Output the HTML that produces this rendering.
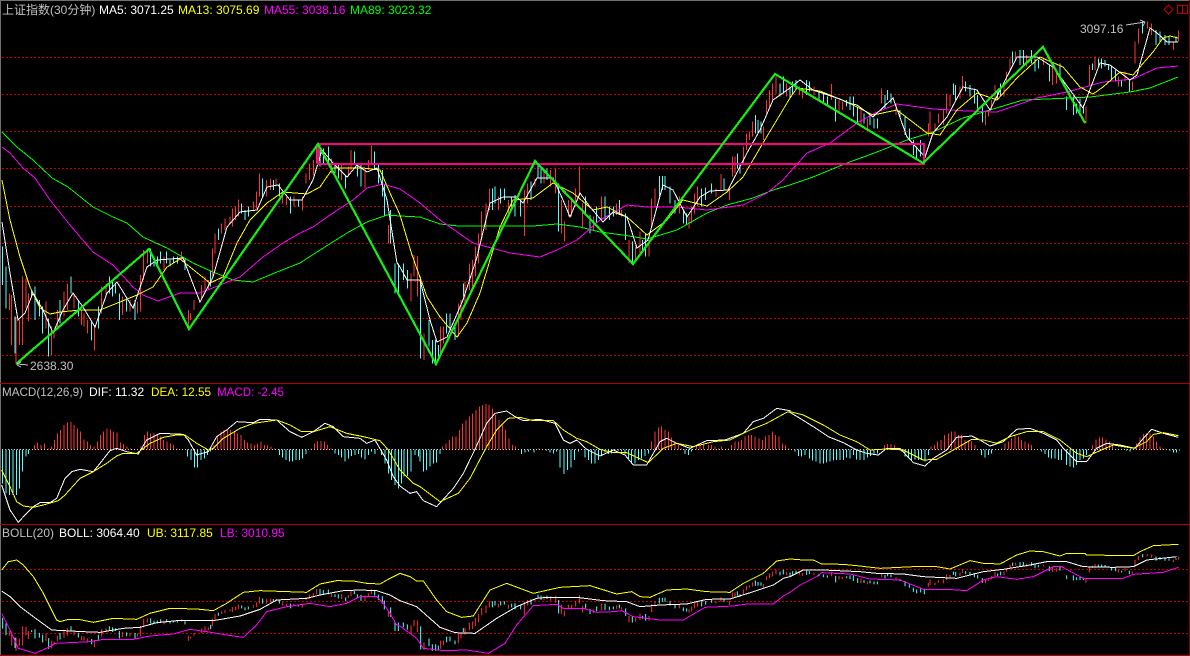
<!DOCTYPE html>
<html><head><meta charset="utf-8"><title>上证指数</title>
<style>
html,body{margin:0;padding:0;background:#000;width:1190px;height:656px;overflow:hidden}
svg{display:block}
text{font-family:"Liberation Sans","Noto Sans CJK SC",sans-serif;font-size:12px}
</style></head><body>
<svg width="1190" height="656" viewBox="0 0 1190 656" xmlns="http://www.w3.org/2000/svg" shape-rendering="crispEdges">
<rect width="1190" height="656" fill="#000"/>
<!-- borders -->
<path d="M0 .5H1190" stroke="#707070" fill="none"/>
<path d="M.5 0V656" stroke="#707070" fill="none"/>
<path d="M1189.5 0V656" stroke="#800000" fill="none"/>
<path d="M0 383.5H1190M0 524.5H1190M0 655.5H1190" stroke="#b00000" fill="none"/>
<!-- grids -->
<path d="M2 57.5H1190M2 94.5H1190M2 131.5H1190M2 168.5H1190M2 206.5H1190M2 243.5H1190M2 281.5H1190M2 318.5H1190M2 355.5H1190M2 569.5H1190M2 601.5H1190M2 633.5H1190" stroke="#c00000" stroke-dasharray="2 2" fill="none"/>

<!-- candles -->
<defs>
<g id="c" fill="none" stroke-width="3">
<g transform="scale(.33333)">
<path stroke="#ff3232" d="M28 880V930M35 885V1035M48 950V1090M58 960V1035M68 830V1035M78 835V925M85 880V965M138 905V985M155 980V1065M162 990V1015M172 930V985M192 875V950M202 850V930M222 885V925M245 930V975M252 940V980M262 960V1000M283 975V1052M305 860V940M318 850V890M367 890V945M390 900V935M412 905V940M421 825V935M431 750V840M442 745V790M492 770V810M545 755V780M565 930V985M572 940V960M582 900V930M605 855V900M615 830V880M625 840V870M637 745V830M645 700V760M665 670V700M675 655V690M690 650V670M697 625V680M707 620V660M715 598V650M760 605V635M770 575V625M778 520V590M800 540V590M812 535V570M828 535V560M848 575V610M860 590V615M882 590V620M907 590V632M918 520V550M928 490V540M940 480V525M950 435V490M995 475V520M1025 490V540M1045 500V530M1053 450V510M1095 505V565M1105 480V510M1114 437V490M1165 675V730"/>
<path stroke="#54ffff" d="M8 740V855M18 800V925M45 950V1060M95 870V890M105 860V960M118 900V950M128 920V1000M146 955V1070M180 900V970M213 830V880M235 900V950M275 965V1022M295 920V985M328 830V880M338 840V890M347 850V880M358 880V960M380 895V935M405 900V960M452 745V800M462 770V800M472 770V800M482 755V790M500 755V790M510 780V800M520 770V790M532 770V790M555 775V810M632 815V860M655 685V720M725 610V640M735 630V660M745 620V650M788 535V590M820 540V570M838 550V590M872 590V640M895 600V620M960 435V500M970 445V490M985 440V490M1005 490V520M1015 490V535M1037 525V565M1063 455V490M1072 490V530M1083 495V560M1124 455V505M1135 495V550M1147 510V590M1153 555V650M1172 630V730M1185 790V880M1195 790V880"/>
</g>
<g transform="translate(400,100) scale(.33333)">
<path stroke="#ff3232" d="M33 520V605M42 465V530M52 470V590M72 700V780M122 680V770M130 680V730M175 610V710M183 600V660M195 545V620M208 490V570M218 480V560M226 440V530M236 400V490M245 335V410M258 310V390M268 265V330M295 290V330M325 300V345M373 270V408M383 250V310M405 235V260M432 210V250M452 210V260M467 205V280M484 300V400M493 365V425M505 300V350M515 300V350M527 265V320M538 200V290M548 310V385M580 350V390M605 290V360M650 310V345M665 330V350M687 420V490M707 440V480M720 395V460M747 420V470M755 295V380M765 265V320M838 290V340M867 350V385M875 320V370M883 280V340M893 260V320M948 265V290M963 222V270M988 260V300M997 170V230M1005 170V220M1030 140V190M1040 100V150M1048 95V120M1058 65V110M1090 80V120M1100 0V40M1108 -30V20M1118 -50V0M1128 -70V-20M1160 -50V-10"/>
<path stroke="#54ffff" d="M10 490V540M22 510V565M62 530V775M87 660V740M97 720V790M107 720V790M115 735V780M140 640V700M150 640V690M165 680V720M190 550V590M277 265V330M285 260V310M302 265V310M313 265V300M335 290V330M345 285V350M362 300V350M393 245V300M414 195V235M423 205V250M441 205V240M476 250V395M557 290V340M570 345V400M590 320V370M615 290V360M628 320V360M640 320V350M658 300V340M677 340V420M697 425V490M728 420V450M737 400V470M778 228V290M787 228V270M795 228V270M810 260V310M825 300V340M850 330V370M860 340V375M905 265V320M917 262V300M935 250V280M972 235V270M1012 160V205M1020 190V220M1066 45V100M1074 60V100M1083 65V100M1140 -50V-10M1150 -70V-20M1170 -40V-5"/>
</g>
<g transform="translate(790,0) scale(.33333)">
<path stroke="#ff3232" d="M28 260V285M38 265V295M72 260V285M125 252V300M147 295V335M157 305V330M213 325V375M232 355V385M275 265V310M318 310V345M415 370V410M420 335V395M435 370V395M445 340V370M460 330V375M470 280V340M480 285V320M510 260V295M517 228V265M587 335V375M595 335V350M605 300V330M615 255V300M642 250V290M650 215V250M660 175V215M677 155V185M710 165V200M760 175V195M788 200V255M800 215V250M888 320V370M898 195V260M915 170V210M985 230V260M1005 215V245M1027 245V270M1035 125V190M1045 85V130M1072 65V85M1085 70V105M1150 125V150M1166 92V125"/>
<path stroke="#54ffff" d="M8 245V285M18 240V270M50 240V285M58 245V275M87 275V300M100 280V310M112 290V315M137 295V365M170 300V320M180 290V330M190 290V350M203 320V370M222 340V370M240 345V375M252 355V385M262 355V385M285 285V325M293 270V300M303 280V310M330 330V350M345 350V405M358 385V420M370 420V465M380 440V480M392 420V470M403 430V490M490 250V285M497 255V300M527 245V275M540 255V290M553 265V310M563 285V325M577 320V368M623 270V295M632 250V290M668 155V190M690 150V195M700 150V195M725 150V190M735 175V215M745 180V205M778 195V245M810 190V240M830 290V330M850 290V345M860 310V340M870 295V340M880 315V340M907 190V210M925 175V200M935 175V205M945 180V200M955 195V210M965 200V240M977 210V245M995 240V260M1018 240V275M1058 65V100M1098 90V135M1110 95V125M1125 105V135M1137 110V135M1158 110V125"/>
</g>
</g>
</defs>
<use href="#c"/>
<use href="#c" transform="translate(0,548) scale(1,.283)"/>

<!-- main MAs -->
<g fill="none" stroke-width="1">
<polyline stroke="#00ff00" points="2,132 17,147 33,160 52,178 68,187 93,207 113,217 127,223 143,237 167,248 193,263 213,272 233,280 253,282 277,272 300,263 317,252 347,233 367,222 387,215 400,216 420,217 440,224 458,226 490,226 513,226 533,226 557,224 580,227 600,232 623,235 647,239 677,230 707,213 727,205 753,198 773,190 790,185 813,177 847,163 877,152 907,140 933,132 963,118 990,110 1023,100 1070,98 1090,97 1130,92 1150,88 1178,77"/>
<polyline stroke="#ff00ff" points="2,147 10,153 23,168 35,178 50,200 70,225 93,252 113,265 133,287 143,295 158,301 180,293 200,293 220,285 240,277 263,257 283,243 300,233 313,227 333,213 353,200 367,188 383,184 400,189 420,203 440,220 473,243 510,253 540,257 557,250 577,240 600,220 627,205 647,207 677,207 707,210 743,205 767,193 783,180 790,172 807,153 830,143 857,123 877,112 897,104 933,109 967,111 997,112 1037,98 1067,92 1103,82 1133,79 1157,68 1178,66"/>
<polyline stroke="#ffff00" points="2,180 10,220 20,257 30,287 40,308 50,314 60,312 80,310 100,310 120,302 137,295 153,287 167,267 180,259 190,267 210,283 223,277 237,243 250,220 267,203 283,192 307,194 320,187 333,168 363,168 380,170 390,193 400,215 412,255 427,297 440,317 457,337 467,323 480,293 500,227 513,200 533,198 553,183 573,193 593,210 607,207 627,217 647,235 667,220 683,200 707,206 727,192 743,177 763,143 790,98 797,88 820,91 847,102 873,115 897,110 910,120 927,133 940,135 957,110 977,93 997,100 1017,78 1040,57 1063,67 1080,87 1093,94 1103,87 1120,72 1133,75 1153,52 1163,38 1170,36 1178,38"/>
<polyline stroke="#ffffff" points="2,222 10,273 18,320 25,313 33,293 43,310 53,333 63,310 73,293 83,307 95,327 107,293 117,282 133,308 147,267 157,260 183,258 200,302 213,277 227,227 240,212 257,210 267,187 278,185 290,200 302,200 313,180 322,150 333,163 347,177 357,165 367,172 377,168 387,200 397,263 400,267 407,280 420,280 430,320 437,342 447,337 463,300 477,257 490,203 503,197 517,197 523,203 537,178 553,178 563,200 570,217 580,193 590,207 603,222 613,212 627,217 637,248 648,240 663,185 673,190 687,217 700,197 710,191 728,190 747,153 760,130 773,100 790,88 800,80 813,90 840,99 848,103 857,105 873,117 893,98 907,137 925,157 933,133 947,117 963,87 977,90 990,110 1017,57 1037,57 1053,67 1070,90 1083,108 1100,63 1110,65 1130,80 1137,75 1150,28 1157,33 1167,42 1178,42"/>
</g>

<!-- pink rectangle & zigzag -->
<path d="M318 144H924V164H318Z" fill="none" stroke="#ff0080" stroke-width="2"/>
<polyline fill="none" stroke="#12f012" stroke-width="2.2" points="16,364 149,249 189,329 318,144 436,364 535,161 633,264 775,74 923,163 1043,47 1085,123"/>

<!-- MACD -->
<g fill="none" stroke-width="3">
<g transform="translate(0,380) scale(.33333)">
<path stroke="#ff3232" d="M103 208V195M113 208V188M123 208V195M133 208V190M145 208V205M155 208V200M163 208V180M172 208V160M182 208V150M192 208V135M203 208V127M213 208V126M222 208V135M232 208V145M242 208V155M252 208V178M262 208V185M272 208V195M282 208V200M292 208V185M302 208V165M311 208V155M321 208V145M331 208V148M341 208V155M351 208V158M361 208V188M371 208V192M381 208V200M391 208V205M423 208V200M433 208V165M442 208V155M452 208V160M462 208V160M472 208V165M482 208V170M491 208V180M501 208V185M511 208V190M521 208V195M531 208V205M642 208V195M652 208V170M663 208V155M672 208V150M682 208V150M692 208V150M703 208V155M713 208V160M723 208V165M733 208V180M743 208V188M753 208V190M763 208V195M773 208V190M783 208V185M793 208V195M803 208V195M813 208V200M823 208V205M933 208V205M943 208V190M953 208V183M963 208V183M973 208V185M983 208V195M993 208V205"/>
<path stroke="#54ffff" d="M7 208V310M18 208V340M28 208V345M39 208V345M49 208V345M59 208V325M68 208V275M78 208V230M85 208V222M563 208V230M573 208V240M583 208V262M593 208V262M603 208V240M613 208V235M623 208V225M632 208V215M838 208V225M848 208V232M858 208V240M868 208V245M878 208V245M888 208V240M898 208V240M908 208V235M918 208V222M1005 208V220M1015 208V225M1025 208V232M1035 208V245M1045 208V235M1055 208V228M1065 208V225M1075 208V222M1085 208V232M1095 208V238M1105 208V225M1115 208V215M1125 208V222M1135 208V208M1145 208V225M1155 208V250M1165 208V280M1175 208V300M1185 208V315M1195 208V325"/>
</g>
<g transform="translate(400,380) scale(.33333)">
<path stroke="#ff3232" d="M128 208V200M138 208V190M148 208V180M158 208V170M168 208V170M178 208V150M188 208V130M198 208V120M208 208V110M218 208V100M228 208V90M238 208V80M248 208V75M258 208V72M267 208V75M277 208V85M287 208V105M297 208V120M307 208V135M317 208V150M327 208V175M337 208V195M347 208V200M415 208V205M755 208V185M765 208V155M775 208V142M785 208V140M795 208V150M805 208V155M815 208V172M825 208V185M835 208V195M845 208V205M890 208V200M900 208V195M910 208V190M925 208V195M935 208V195M945 208V200M955 208V205M965 208V200M985 208V205M995 208V195M1005 208V185M1015 208V185M1025 208V180M1035 208V170M1045 208V165M1055 208V165M1065 208V170M1077 208V175M1087 208V180M1097 208V170M1107 208V165M1117 208V155M1127 208V165M1137 208V170M1147 208V190M1157 208V195M1167 208V205"/>
<path stroke="#54ffff" d="M5 208V310M12 208V290M23 208V288M33 208V275M45 208V225M55 208V230M60 208V245M70 208V275M80 208V270M90 208V260M100 208V250M110 208V248M120 208V222M365 208V222M375 208V218M385 208V215M402 208V218M440 208V212M450 208V218M460 208V220M470 208V215M480 208V262M492 208V282M503 208V270M513 208V262M523 208V240M535 208V215M545 208V210M555 208V232M565 208V240M575 208V250M585 208V250M595 208V240M605 208V225M615 208V218M625 208V222M635 208V220M645 208V215M655 208V212M665 208V215M675 208V222M685 208V235M695 208V250M705 208V250M715 208V240M725 208V235M735 208V228M745 208V220M855 208V222M865 208V225M875 208V215M1185 208V215M1195 208V225"/>
</g>
<g transform="translate(790,380) scale(.33333)">
<path stroke="#ff3232" d="M283 208V195M293 208V192M303 208V192M313 208V195M323 208V203M423 208V200M433 208V195M443 208V185M453 208V180M463 208V165M475 208V160M485 208V155M495 208V155M505 208V165M515 208V165M525 208V180M535 208V185M545 208V185M555 208V195M635 208V205M645 208V190M655 208V185M665 208V175M675 208V165M685 208V170M695 208V180M705 208V185M715 208V190M725 208V195M908 208V195M918 208V178M928 208V172M938 208V172M948 208V178M958 208V185M968 208V195M1040 208V190M1050 208V172M1060 208V162M1070 208V160M1080 208V160M1090 208V170M1100 208V185M1110 208V200M1118 208V205"/>
<path stroke="#54ffff" d="M15 208V215M25 208V228M35 208V230M45 208V225M58 208V235M68 208V242M78 208V245M90 208V250M100 208V250M110 208V248M120 208V245M130 208V242M140 208V240M150 208V240M160 208V240M170 208V232M180 208V235M190 208V225M200 208V238M210 208V240M222 208V240M232 208V232M242 208V228M252 208V225M262 208V220M272 208V210M335 208V215M345 208V230M355 208V232M365 208V240M375 208V238M385 208V240M395 208V240M405 208V245M415 208V225M575 208V225M585 208V232M595 208V225M605 208V220M755 208V215M765 208V222M775 208V232M785 208V235M795 208V235M805 208V240M815 208V240M830 208V255M840 208V260M850 208V262M860 208V255M870 208V240M880 208V235M890 208V225M1010 208V212M1020 208V215M1140 208V212M1150 208V218M1160 208V218M1168 208V212"/>
</g>
</g>
<path d="M2 449.5H1178" stroke="#d0d0d0" stroke-dasharray="1 2" fill="none"/>
<g fill="none" stroke-width="3">
<g transform="translate(0,380) scale(.33333)">
<polyline stroke="#ffffff" points="5,315 15,345 30,390 55,427 75,405 100,380 120,368 150,368 170,355 195,295 215,275 240,268 280,275 300,250 330,212 350,205 380,215 415,222 440,180 480,160 550,163 565,180 590,225 600,222 625,215 650,170 680,150 710,125 760,128 780,118 830,120 870,155 905,172 940,155 975,130 1000,140 1030,170 1080,175 1100,190 1125,180 1160,240 1180,290 1200,318"/>
<polyline stroke="#ffff00" points="5,270 30,320 50,365 70,378 100,382 130,375 175,362 195,345 240,295 280,275 320,250 350,228 370,220 410,220 450,190 490,172 530,165 555,165 590,190 625,210 640,205 670,175 720,145 760,130 830,120 870,135 905,155 940,155 990,140 1040,160 1090,170 1140,182 1165,210 1200,270"/>
<polyline stroke="#ffff00" points="5,570 25,545 50,540 70,555 100,590 130,640 170,720 180,725 205,718 235,718 280,727 340,715 410,718 450,700 510,685 590,687 640,692 680,670 730,637 780,632 920,637 960,612 1010,602 1060,603 1100,610 1140,612 1170,595 1200,580"/>
<polyline stroke="#ffffff" points="5,633 30,650 60,680 100,710 155,750 250,755 300,757 370,745 420,742 470,728 530,722 640,722 720,708 780,688 830,660 920,655 960,645 1030,632 1080,630 1130,632 1170,645 1200,662"/>
<polyline stroke="#ff00ff" points="5,700 30,750 55,805 105,820 150,800 165,790 210,788 270,785 310,778 400,778 450,768 520,762 570,748 620,755 700,768 730,772 770,735 800,695 860,680 930,670 990,680 1040,670 1080,650 1130,650 1150,670 1170,700 1190,735 1200,738"/>
</g>
<g transform="translate(400,380) scale(.33333)">
<polyline stroke="#ffffff" points="0,318 30,340 50,335 70,362 110,380 160,325 190,280 225,208 260,130 285,100 320,93 345,110 370,122 420,118 465,130 490,180 510,190 530,180 560,208 600,228 640,210 675,225 700,255 740,255 780,185 800,175 830,190 870,205 920,182 975,180 1030,160 1060,125 1090,115 1130,85 1170,92 1170,97"/>
<polyline stroke="#ffff00" points="0,270 40,310 60,320 120,365 175,340 210,295 260,200 290,150 325,115 360,112 400,122 460,122 490,150 530,175 560,185 600,208 640,218 680,218 745,248 790,205 830,190 880,200 940,185 990,180 1050,150 1100,130 1160,97 1170,95"/>
<polyline stroke="#ffff00" points="0,580 30,590 50,603 70,603 110,660 140,695 185,712 220,708 270,630 320,610 400,640 480,622 570,617 650,642 695,635 720,650 750,652 800,630 860,627 920,635 990,637 1030,610 1090,580 1130,543 1170,537"/>
<polyline stroke="#ffffff" points="0,662 50,680 120,742 165,758 225,760 290,715 350,680 410,655 440,652 530,652 610,662 680,665 720,680 780,675 860,672 920,658 990,657 1060,635 1120,615 1150,595 1170,590"/>
<polyline stroke="#ff00ff" points="0,738 50,775 70,805 130,812 200,810 265,820 315,790 350,735 400,677 470,673 490,685 550,685 590,697 640,695 665,692 700,710 780,720 850,720 915,682 1000,678 1040,672 1120,672 1150,648 1170,637"/>
</g>
<g transform="translate(790,380) scale(.33333)">
<polyline stroke="#ffffff" points="0,97 30,115 70,140 115,170 160,188 200,210 230,220 265,225 290,205 330,205 370,248 405,258 430,235 470,210 500,172 545,168 570,180 600,198 640,185 680,148 720,145 760,160 800,180 820,205 860,245 890,245 920,205 950,190 990,195 1035,205 1060,175 1085,148 1120,160 1165,172"/>
<polyline stroke="#ffff00" points="0,95 40,105 100,135 150,165 200,185 240,210 290,207 340,210 400,240 440,238 490,210 545,178 580,180 620,190 660,170 710,155 760,155 810,180 860,220 890,230 930,212 970,195 1030,205 1070,185 1090,163 1120,158 1165,167"/>
<polyline stroke="#ffff00" points="0,537 40,540 70,540 95,552 160,553 200,557 270,565 370,560 440,560 480,567 540,542 580,550 630,552 680,525 720,513 760,515 810,528 830,520 885,520 890,525 1030,527 1050,515 1090,497 1165,493"/>
<polyline stroke="#ffffff" points="0,590 40,570 100,570 210,575 260,580 340,582 400,590 500,595 580,575 640,568 720,555 770,545 830,545 880,560 970,562 1030,560 1070,540 1160,530"/>
<polyline stroke="#ff00ff" points="0,637 30,615 80,590 95,578 180,582 240,597 330,600 400,628 470,628 530,632 580,600 620,590 680,598 730,590 790,560 815,560 880,595 1000,595 1030,583 1120,577 1165,562"/>
</g>
</g>

<!-- arrows & icons -->
<path d="M17 364L28 365M17 364L21 362M17 365L21 367" stroke="#c0c0c0" fill="none"/>
<path d="M1126 25L1145 22M1145 22L1140 20M1145 22L1143 26" stroke="#c0c0c0" fill="none"/>
<path d="M1168.5 5L1173 9.5L1168.5 14L1164 9.5Z" fill="none" stroke="#c00000"/>
<path d="M1177.5 5.5H1187.5V13.5H1177.5ZM1182.5 5.5V13.5" fill="none" stroke="#c00000"/>

<!-- text -->
<g shape-rendering="auto">
<text x="2" y="14" fill="#c0c0c0">上证指数(30分钟)</text>
<text x="99" y="14" fill="#ffffff">MA5: 3071.25</text>
<text x="178" y="14" fill="#ffff00">MA13: 3075.69</text>
<text x="264" y="14" fill="#ff00ff">MA55: 3038.16</text>
<text x="350" y="14" fill="#00ff00">MA89: 3023.32</text>
<text x="2" y="396" fill="#c0c0c0" textLength="81" lengthAdjust="spacingAndGlyphs">MACD(12,26,9)</text>
<text x="89" y="396" fill="#ffffff">DIF: 11.32</text>
<text x="151" y="396" fill="#ffff00" textLength="60" lengthAdjust="spacingAndGlyphs">DEA: 12.55</text>
<text x="217" y="396" fill="#ff00ff" textLength="67" lengthAdjust="spacingAndGlyphs">MACD: -2.45</text>
<text x="2" y="537" fill="#c0c0c0">BOLL(20)</text>
<text x="59" y="537" fill="#ffffff">BOLL: 3064.40</text>
<text x="147" y="537" fill="#ffff00">UB: 3117.85</text>
<text x="220" y="537" fill="#ff00ff">LB: 3010.95</text>
<text x="30" y="370" fill="#c0c0c0">2638.30</text>
<text x="1080" y="33" fill="#c0c0c0">3097.16</text>
</g>
</svg>
</body></html>
